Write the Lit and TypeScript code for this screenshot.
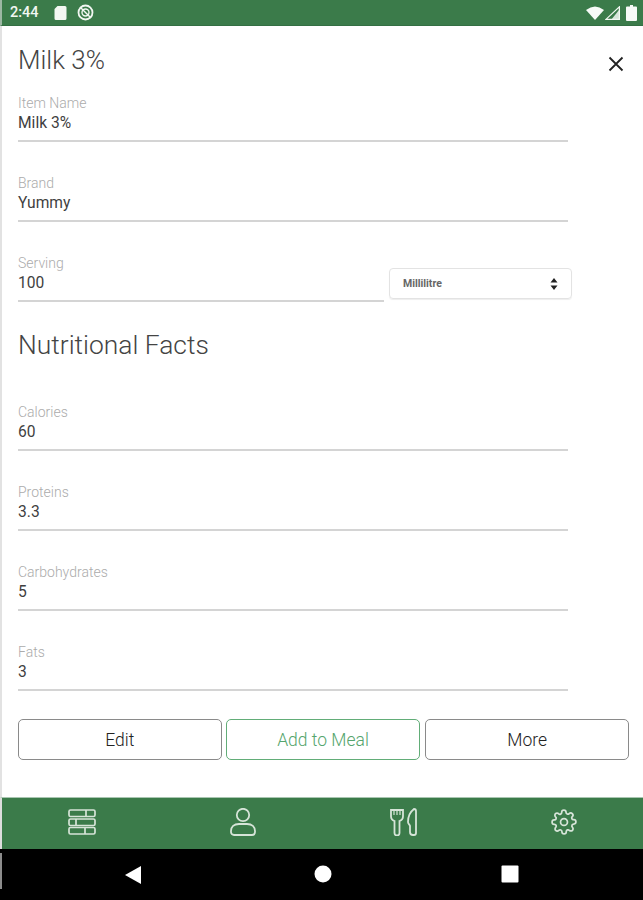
import { LitElement, html, css } from "lit";
import { customElement } from "lit/decorators.js";

const field = (label: string, value: string) => html`
  <div class="field">
    <div class="label">${label}</div>
    <div class="value">${value}</div>
  </div>`;

@customElement("app-root")
export class AppRoot extends LitElement {
  static styles = css`
    :host { display: flex; flex-direction: column; width: 643px; height: 900px; overflow: hidden; background: #fff; font-family: Roboto, "Liberation Sans", sans-serif; }
    svg { display: block; }
    .status { height: 26px; background: #3b7b4a; display: flex; align-items: center; padding: 0 6px 0 8px; color: #f2f7f2; font-size: 14.5px; font-weight: 500; box-sizing: border-box; border-left: 2px solid #9db8a4; border-bottom: 1px solid #346f43; flex: none; }
    .left { display: flex; align-items: center; gap: 10px; flex: 1; }
    .time { margin-right: 4px; width: 30px; }
    .right { display: flex; align-items: center; gap: 1px; }
    .battery { margin-left: 5px; }
    .main { flex: 1; display: flex; flex-direction: column; border-left: 2px solid #e2e2e2; padding: 0 14px 0 16px; min-height: 0; }
    .head { height: 69px; display: flex; align-items: center; justify-content: space-between; flex: none; padding-bottom: 2px; box-sizing: border-box; }
    h1 { margin: 0; font-size: 26px; font-weight: 300; color: #444; line-height: 30px; }
    .close { margin-right: 5px; position: relative; top: 4px; }
    .field { width: 550px; height: 45px; border-bottom: 2px solid #d4d4d4; margin-bottom: 33px; }
    .label { font-size: 14px; font-weight: 300; line-height: 16px; color: #ababab; height: 16px; }
    .value { font-size: 15.6px; line-height: 20px; color: #3f3f3f; margin-top: 2px; }
    .serving { display: flex; width: 554px; align-items: flex-start; gap: 5px; }
    .serving .field { width: 366px; margin-bottom: 0; flex: none; }
    .select { width: 183px; height: 31px; margin-top: 13px; border: 1px solid #e3e3e3; border-radius: 4px; box-sizing: border-box; display: flex; align-items: center; justify-content: space-between; padding: 0 13px; font-size: 10.5px; font-weight: 700; color: #666; box-shadow: 0 1px 1px #eee; flex: none; }
    h2 { margin: 24px 0 0; font-size: 26.4px; font-weight: 300; color: #444; line-height: 38px; height: 78px; }
    .buttons { display: flex; gap: 4px; flex: none; margin-top: -5px; }
    button { height: 41px; box-sizing: border-box; background: #fff; border: 1.5px solid #8a8a8a; border-radius: 5px; font-family: Roboto, sans-serif; font-size: 17.5px; font-weight: 300; color: #222; padding: 0; }
    .b1 { width: 204px; }
    .b2 { width: 195px; border-color: #62ad78; color: #55a56d; }
    .b3 { width: 204px; margin-left: 1px; }
    .tabs { height: 52px; background: #3b7b4a; flex: none; border-left: 2px solid #ddd; border-top: 1px solid #a9c6b1; display: grid; grid-template-columns: repeat(4, 160.5px); box-sizing: border-box; align-items: center; padding-bottom: 3px; }
    .tabs div { display: flex; justify-content: center; }
    .nav { height: 51px; background: #000; flex: none; position: relative; }
    .nav svg { position: absolute; top: 16px; }
    .edge { position: absolute; left: 0; top: 4px; width: 2px; height: 36px; background: #8c8c8c; }
    .back { left: 124px; }
    .home { left: 314px; }
    .recent { left: 501px; }
  `;

  render() {
    return html`
      <div class="status">
        <div class="left">
          <span class="time">2:44</span>
          <svg width="13" height="15" viewBox="0 0 13 15"><path d="M3.500 1H11a1.500 1.500 0 0 1 1.500 1.500v11A1.500 1.500 0 0 1 11 15H2a1.500 1.500 0 0 1-1.500-1.500V4z" fill="#f2f7f2"/></svg>
          <svg width="17" height="17" viewBox="0 0 17 17" fill="none" stroke="#f2f7f2"><circle cx="8.500" cy="8.500" r="7" stroke-width="1.800"/><circle cx="8.500" cy="8.500" r="3.500" stroke-width="1.400"/><path d="M3 3l11 11" stroke-width="1.400"/></svg>
        </div>
        <div class="right">
          <svg width="18" height="14" viewBox="0 0 18 14"><path d="M0 4Q9-3 18 4L9 14z" fill="#f7faf7"/></svg>
          <svg width="15" height="14" viewBox="0 0 15 14"><path d="M14.400.8v12.600H.9z" fill="none" stroke="#f2f7f2" stroke-width="1.200"/><path d="M14 4v10H6z" fill="#f2f7f2" opacity=".85"/></svg>
          <svg class="battery" width="11" height="16" viewBox="0 0 11 16"><path d="M4 0h3v1.500h3a1 1 0 0 1 1 1V15a1 1 0 0 1-1 1H1a1 1 0 0 1-1-1V2.500a1 1 0 0 1 1-1h3z" fill="#f7faf7"/></svg>
        </div>
      </div>
      <div class="main">
        <div class="head">
          <h1>Milk 3%</h1>
          <svg class="close" width="16" height="16" viewBox="0 0 16 16" stroke="#222" stroke-width="1.800"><path d="M1.500 1.500l13 13M14.500 1.500l-13 13"/></svg>
        </div>
        ${field("Item Name", "Milk 3%")}
        ${field("Brand", "Yummy")}
        <div class="serving">
          ${field("Serving", "100")}
          <div class="select"><span>Millilitre</span>
            <svg width="8" height="12" viewBox="0 0 8 12" fill="#222"><path d="M4 0l3.500 4.500h-7zM4 12L.5 7.500h7z"/></svg>
          </div>
        </div>
        <h2>Nutritional Facts</h2>
        ${field("Calories", "60")}
        ${field("Proteins", "3.3")}
        ${field("Carbohydrates", "5")}
        ${field("Fats", "3")}
        <div class="buttons">
          <button class="b1">Edit</button>
          <button class="b2">Add to Meal</button>
          <button class="b3">More</button>
        </div>
      </div>
      <div class="tabs">
        <div><svg width="28" height="26" viewBox="0 0 28 26" fill="none" stroke="#d6e4d8" stroke-width="1.700"><rect x="1" y="1" width="26" height="6.500" rx="1.500"/><rect x="1" y="10" width="26" height="6.500" rx="1.500"/><rect x="1" y="18.500" width="26" height="6.500" rx="1.500"/><path d="M18 1v6.500M8 10v6.500M17 18.500V25"/></svg></div>
        <div><svg width="26" height="28" viewBox="0 0 26 28" fill="none" stroke="#d6e4d8" stroke-width="1.800"><circle cx="13" cy="7" r="6.200"/><path d="M9 16h8c5 0 8 3 8 7v1a3 3 0 0 1-3 3H4a3 3 0 0 1-3-3v-1c0-4 3-7 8-7z"/></svg></div>
        <div><svg width="27" height="28" viewBox="0 0 27 28" fill="none" stroke="#d6e4d8" stroke-width="1.800"><path d="M1 2h12v6a5 5 0 0 1-3.500 5v12a2.500 2.500 0 0 1-5 0V13A5 5 0 0 1 1 8z"/><path d="M4 2v5M7 2v5M10 2v5" stroke-width="1.200"/><path d="M24 1c1.500 0 2 1 2 2v22a2 2 0 0 1-2 2h-1a3 3 0 0 1-3-3v-6c0-1-2-2-2-4 0-5 2-10 6-13z"/></svg></div>
        <div><svg width="26" height="26" viewBox="0 0 24 24" fill="none" stroke="#d6e4d8" stroke-width="1.600" stroke-linecap="round" stroke-linejoin="round"><circle cx="12" cy="12" r="3.200"/><path d="M19.400 15a1.650 1.650 0 0 0 .33 1.820l.06.06a2 2 0 1 1-2.830 2.830l-.06-.06a1.650 1.650 0 0 0-2.800 1.170V21a2 2 0 0 1-4 0v-.09a1.650 1.650 0 0 0-2.880-1.150l-.06.06a2 2 0 1 1-2.830-2.830l.06-.06a1.650 1.650 0 0 0-1.170-2.800H3a2 2 0 0 1 0-4h.09a1.650 1.650 0 0 0 1.150-2.880l-.06-.06a2 2 0 1 1 2.830-2.830l.06.06a1.650 1.650 0 0 0 2.800-1.170V3a2 2 0 0 1 4 0v.09a1.650 1.650 0 0 0 2.880 1.150l.06-.06a2 2 0 1 1 2.830 2.830l-.06.06a1.650 1.650 0 0 0 1.170 2.800H21a2 2 0 0 1 0 4h-.09a1.650 1.650 0 0 0-1.510 1z"/></svg></div>
      </div>
      <div class="nav">
        <div class="edge"></div>
        <svg class="back" width="18" height="20" viewBox="0 0 18 20" fill="#fff"><path d="M17 1v18L1 10z"/></svg>
        <svg class="home" width="18" height="18" viewBox="0 0 18 18" fill="#fff"><circle cx="9" cy="9" r="8.500"/></svg>
        <svg class="recent" width="18" height="18" viewBox="0 0 18 18" fill="#fff"><rect x=".5" y=".5" width="17" height="17" rx="1"/></svg>
      </div>
    `;
  }
}
